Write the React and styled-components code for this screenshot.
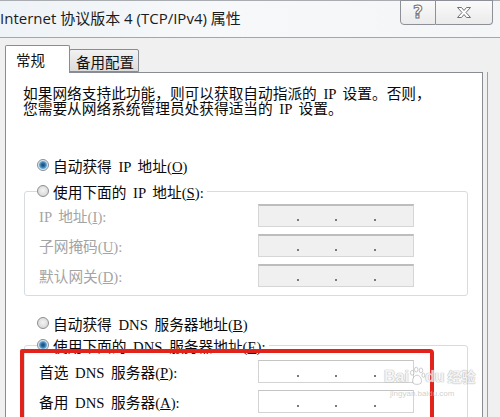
import React from "react";
import styled, { createGlobalStyle } from "styled-components";

const Global = createGlobalStyle`
  html, body { margin: 0; padding: 0; background: #f0f0f0; overflow: hidden; }
  #root { width: 500px; height: 417px; }
`;

const Window = styled.div`
  position: relative;
  width: 500px;
  height: 417px;
  overflow: hidden;
  background: #f0f0f0;
  display: flex;
  flex-direction: column;
`;

const TitleBar = styled.div`
  height: 36px;
  border-top: 1px solid #a9adb2;
  border-bottom: 1px solid #a3a6aa;
  background: linear-gradient(90deg, #eef3f7 0%, #f7f8f9 45%, #f4f5f6 100%);
  display: flex;
  align-items: flex-start;
  justify-content: space-between;
  flex-shrink: 0;
`;

const Title = styled.div`
  font-family: "Open Sans", "Noto Sans CJK SC", sans-serif;
  font-size: 15px;
  color: #1c1c1c;
  line-height: 20px;
  margin-top: 7px;
  margin-left: 0;
  white-space: nowrap;
`;

const Caption = styled.div`
  display: flex;
  margin-right: 7px;
  margin-top: -1px;
`;

const CapBtn = styled.div`
  width: ${(p) => p.$w}px;
  height: 25px;
  box-sizing: border-box;
  border: 1px solid #8d9197;
  border-left-width: ${(p) => (p.$first ? 1 : 0)}px;
  border-radius: ${(p) => (p.$first ? "0 0 0 4px" : "0 0 4px 0")};
  background: linear-gradient(#fafafa, #ebebeb);
  display: flex;
  align-items: center;
  justify-content: center;
`;

const HelpGlyph = styled.span`
  font-family: "DejaVu Sans", sans-serif;
  font-weight: bold;
  font-size: 17px;
  line-height: 17px;
  color: #ffffff;
  -webkit-text-stroke: 1px #6f7378;
`;

const Body = styled.div`
  flex: 1;
  display: flex;
  flex-direction: column;
  padding-left: 5px;
  padding-top: 7px;
`;

const Tabs = styled.div`
  display: flex;
  align-items: flex-end;
  height: 27px;
  position: relative;
  z-index: 2;
`;

const Tab = styled.div`
  box-sizing: border-box;
  width: ${(p) => p.$w}px;
  height: ${(p) => (p.$active ? 28 : 23)}px;
  margin-bottom: ${(p) => (p.$active ? -1 : 0)}px;
  margin-left: ${(p) => (p.$active ? 0 : -1)}px;
  border: 1px solid #898c95;
  border-bottom: ${(p) => (p.$active ? "none" : "1px solid #898c95")};
  border-radius: 2px 2px 0 0;
  background: ${(p) => (p.$active ? "#ffffff" : "linear-gradient(#f2f2f2, #dcdcdc)")};
  font-family: "Noto Sans CJK SC", sans-serif;
  font-size: 14.5px;
  color: #111;
  display: flex;
  align-items: center;
  padding-left: ${(p) => p.$pl}px;
  padding-top: ${(p) => (p.$active ? 0 : 1)}px;
  z-index: ${(p) => (p.$active ? 2 : 1)};
  position: relative;
`;

const Frame = styled.div`
  flex: 1;
  width: 482px;
  border-right: 1px solid #a0a0a0;
  display: flex;
`;

const Panel = styled.div`
  width: 478px;
  box-sizing: border-box;
  border: 1px solid #898c95;
  border-bottom: none;
  background: #ffffff;
  display: flex;
  flex-direction: column;
  font-family: "Liberation Serif", "Noto Sans CJK SC", serif;
  font-size: 14.7px;
  word-spacing: 3px;
  color: #0a0a0a;
`;

const Intro = styled.p`
  margin: 14px 0 0 17px;
  line-height: 15px;
  white-space: nowrap;
`;

const RadioRow = styled.div`
  display: flex;
  align-items: center;
  gap: 4px;
  height: 20px;
  margin-top: ${(p) => p.$mt || 0}px;
  margin-left: ${(p) => p.$ml || 0}px;
  white-space: nowrap;
`;

const Radio = styled.span`
  width: 12px;
  height: 12px;
  box-sizing: border-box;
  border-radius: 50%;
  border: 1px solid #8a8e93;
  flex-shrink: 0;
  background: ${(p) =>
    p.$checked
      ? "radial-gradient(circle at 50% 50%, #16476f 0, #2d6fa3 2px, #6aa7d4 3.5px, #d6e8f4 4.5px, #eef4f8 100%)"
      : "radial-gradient(circle at 50% 45%, #f4f4f4 0, #dadada 70%, #cfcfcf 100%)"};
`;

const Group = styled.fieldset`
  margin: ${(p) => p.$mt}px 0 0 18px;
  width: 444px;
  box-sizing: border-box;
  border: 1px solid #d5dde3;
  border-radius: 3px;
  padding: 0;
  min-width: 0;
`;

const Legend = styled.legend`
  margin-left: 12px;
  padding: 0 3px 0 0;
  display: flex;
  align-items: center;
  gap: 4px;
  height: 20px;
  white-space: nowrap;
`;

const Fields = styled.div`
  display: grid;
  grid-template-columns: 219px 156px;
  row-gap: 7px;
  align-items: center;
  padding: ${(p) => p.$pt}px 0 8px 14px;
`;

const Label = styled.span`
  color: ${(p) => (p.$disabled ? "#a4a4a4" : "#0a0a0a")};
  white-space: nowrap;
`;

const IpBox = styled.div`
  height: 23px;
  box-sizing: border-box;
  border: 1px solid ${(p) => (p.$disabled ? "#d6d6d6" : "#d3d3d3")};
  border-top: ${(p) => (p.$disabled ? "2px solid #bdbdbd" : "1px solid #c4c4c4")};
  background: ${(p) => (p.$disabled ? "#f0f0f0" : "#ffffff")};
  display: grid;
  grid-template-columns: repeat(4, 1fr);
`;

const Seg = styled.div`
  display: flex;
  justify-content: flex-end;
  align-items: flex-end;
  padding-bottom: 5px;
`;

const Dot = styled.span`
  width: 2px;
  height: 2px;
  background: #7a7a7a;
  margin-right: -1px;
`;

const RedMark = styled.div`
  position: absolute;
  left: 20px;
  top: 349px;
  width: 414px;
  height: 90px;
  box-sizing: border-box;
  border: 4px solid #e2231c;
  border-radius: 2px 4px 0 0;
  pointer-events: none;
`;

const Watermark = styled.div`
  position: absolute;
  left: 384px;
  top: 366px;
  display: flex;
  flex-direction: column;
  align-items: flex-start;
  pointer-events: none;
  opacity: 0.8;
`;

const WmMain = styled.div`
  display: flex;
  align-items: flex-end;
  font-family: "Liberation Sans", "Noto Sans CJK SC", sans-serif;
  font-weight: bold;
  font-size: 16px;
  line-height: 18px;
  color: rgba(255, 255, 255, 0.9);
  text-shadow: 0 0 1px #9a9a9a, 0 0 1px #9a9a9a;
`;

const WmSub = styled.div`
  font-family: "Liberation Sans", sans-serif;
  font-size: 8px;
  color: rgba(190, 190, 190, 0.9);
  margin-left: 6px;
  margin-top: 3px;
`;

const WmCn = styled.span`
  font-size: 14px;
  margin-left: 3px;
`;

function IpInput({ disabled }) {
  return (
    <IpBox $disabled={disabled}>
      <Seg><Dot /></Seg>
      <Seg><Dot /></Seg>
      <Seg><Dot /></Seg>
      <Seg />
    </IpBox>
  );
}

function Key({ k }) {
  return (
    <>
      (<u>{k}</u>)
    </>
  );
}

export default function App() {
  return (
    <>
      <Global />
      <Window>
        <TitleBar>
          <Title>Internet 协议版本 4 (TCP/IPv4) 属性</Title>
          <Caption>
            <CapBtn $w={36} $first>
              <HelpGlyph>?</HelpGlyph>
            </CapBtn>
            <CapBtn $w={57}>
              <svg width="16" height="13" viewBox="0 0 16 13">
                <path
                  d="M1.5 1.5 H5.5 L8 4.5 L10.5 1.5 H14.5 L10 6.5 L14.5 11.5 H10.5 L8 8.5 L5.5 11.5 H1.5 L6 6.5 Z"
                  fill="#ffffff"
                  stroke="#6f7378"
                  strokeWidth="1"
                  strokeLinejoin="round"
                />
              </svg>
            </CapBtn>
          </Caption>
        </TitleBar>
        <Body>
          <Tabs>
            <Tab $active $w={65} $pl={10}>常规</Tab>
            <Tab $w={70} $pl={6}>备用配置</Tab>
          </Tabs>
          <Frame>
            <Panel>
              <Intro>
                如果网络支持此功能，则可以获取自动指派的 IP 设置。否则，
                <br />
                您需要从网络系统管理员处获得适当的 IP 设置。
              </Intro>
              <RadioRow $mt={38} $ml={31}>
                <Radio $checked />
                <span>自动获得 IP 地址<Key k="O" /></span>
              </RadioRow>
              <Group $mt={6}>
                <Legend>
                  <Radio />
                  <span>使用下面的 IP 地址<Key k="S" />:</span>
                </Legend>
                <Fields $pt={3}>
                  <Label $disabled>IP 地址<Key k="I" />:</Label>
                  <IpInput disabled />
                  <Label $disabled>子网掩码<Key k="U" />:</Label>
                  <IpInput disabled />
                  <Label $disabled>默认网关<Key k="D" />:</Label>
                  <IpInput disabled />
                </Fields>
              </Group>
              <RadioRow $mt={17} $ml={31}>
                <Radio />
                <span>自动获得 DNS 服务器地址<Key k="B" /></span>
              </RadioRow>
              <Group $mt={2}>
                <Legend>
                  <Radio $checked />
                  <span>使用下面的 DNS 服务器地址<Key k="E" />:</span>
                </Legend>
                <Fields $pt={5}>
                  <Label>首选 DNS 服务器<Key k="P" />:</Label>
                  <IpInput />
                  <Label>备用 DNS 服务器<Key k="A" />:</Label>
                  <IpInput />
                </Fields>
              </Group>
            </Panel>
          </Frame>
        </Body>
        <RedMark />
        <Watermark>
          <WmMain>
            <span>Bai</span>
            <svg width="16" height="20" viewBox="0 0 20 24">
              <g fill="rgba(255,255,255,0.9)" stroke="#a0a0a0" strokeWidth="0.8">
                <ellipse cx="4" cy="8" rx="2.2" ry="3" />
                <ellipse cx="9" cy="4" rx="2.2" ry="3" />
                <ellipse cx="15" cy="5" rx="2.2" ry="3" />
                <ellipse cx="18" cy="11" rx="1.8" ry="2.6" />
                <path d="M10 11 C14 11 17 17 15 21 C13 23 7 23 5 21 C3 17 6 11 10 11 Z" />
              </g>
            </svg>
            <span>du</span>
            <WmCn>经验</WmCn>
          </WmMain>
          <WmSub>jingyan.baidu.com</WmSub>
        </Watermark>
      </Window>
    </>
  );
}
